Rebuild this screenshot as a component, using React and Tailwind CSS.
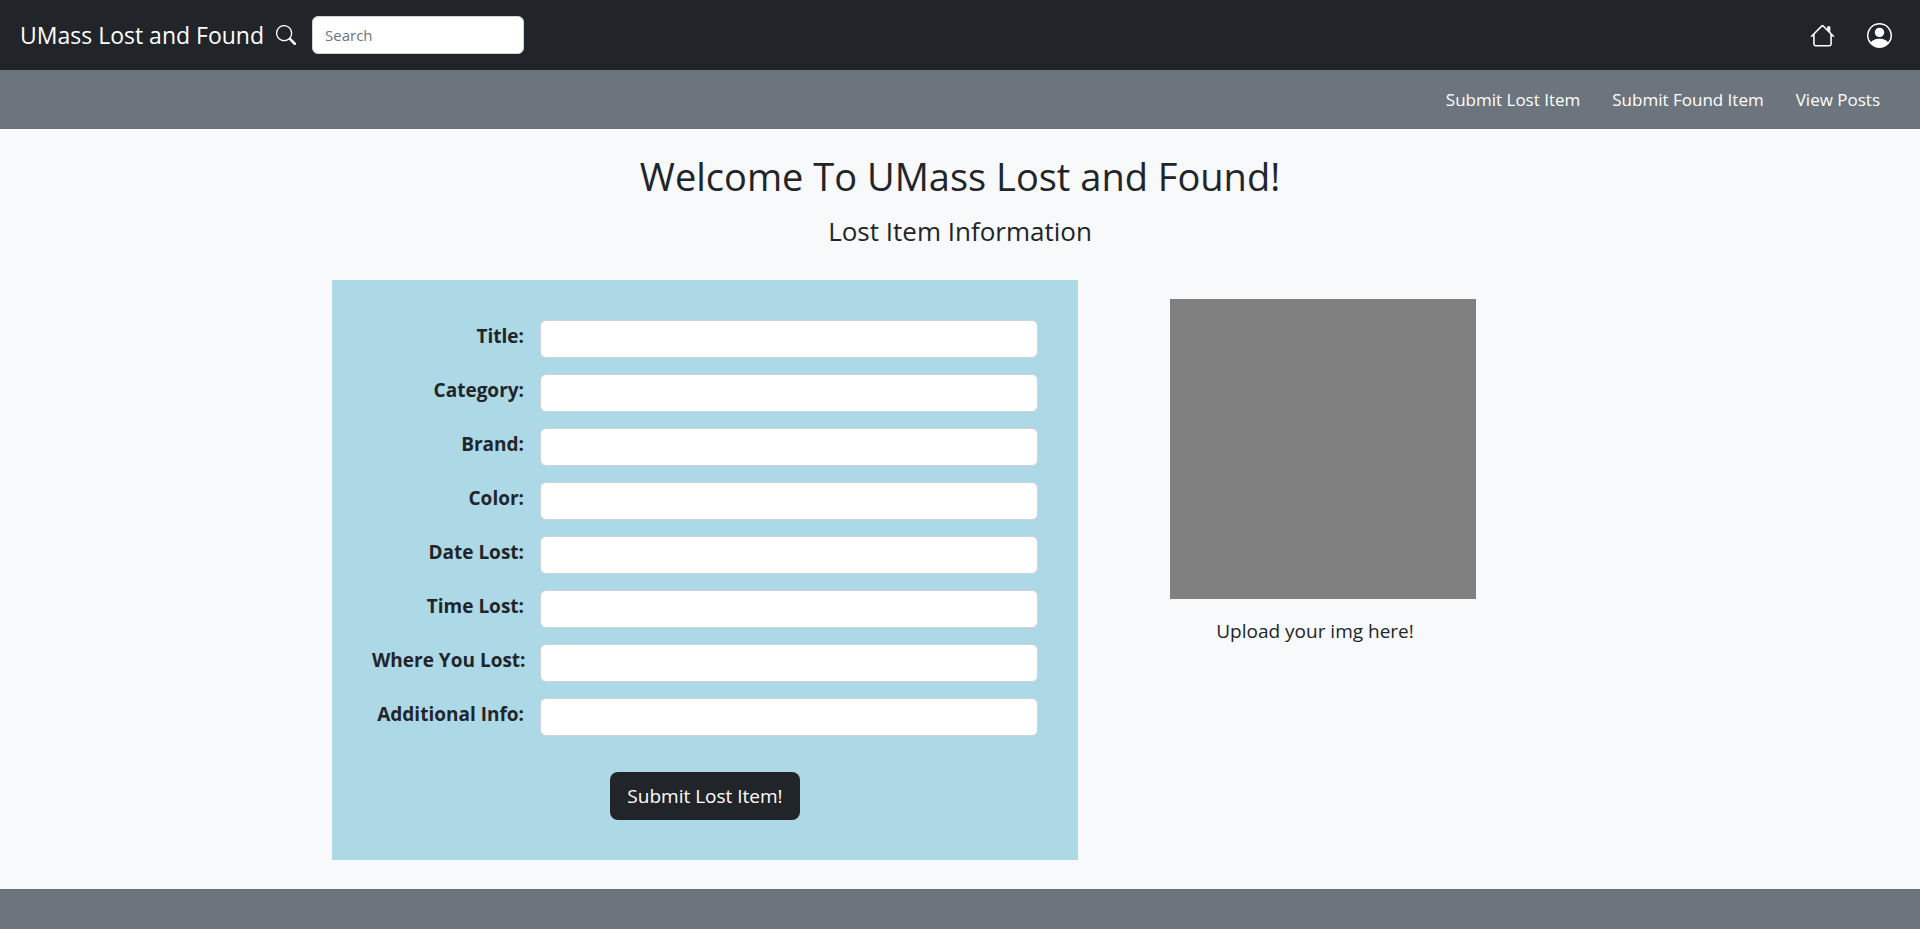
import { BsHouse, BsPersonCircle, BsSearch } from "react-icons/bs";

const fields = [
  { id: "title", label: "Title:" },
  { id: "category", label: "Category:" },
  { id: "brand", label: "Brand:" },
  { id: "color", label: "Color:" },
  { id: "date-lost", label: "Date Lost:" },
  { id: "time-lost", label: "Time Lost:" },
  { id: "where-lost", label: "Where You Lost:" },
  { id: "additional-info", label: "Additional Info:" },
];

const links = ["Submit Lost Item", "Submit Found Item", "View Posts"];

function TopBar() {
  return (
    <header className="flex h-[70px] items-center justify-between bg-[#212529] pl-5 pr-7 text-white">
      <div className="flex items-center">
        <a href="#" className="whitespace-nowrap text-[23px] leading-8">
          UMass Lost and Found
        </a>
        <label htmlFor="search" className="ml-3 mr-4">
          <BsSearch size={20} aria-label="Search" />
        </label>
        <input
          id="search"
          type="search"
          placeholder="Search"
          className="h-[38px] w-[212px] rounded-md border border-[#ced4da] bg-white px-3 text-[15px] text-[#212529] placeholder:text-[#6c757d]"
        />
      </div>
      <nav className="flex items-center gap-8">
        <a href="#" aria-label="Home">
          <BsHouse size={25} />
        </a>
        <a href="#" aria-label="Profile">
          <BsPersonCircle size={25} />
        </a>
      </nav>
    </header>
  );
}

function LinkBar() {
  return (
    <nav className="flex h-[59px] items-center justify-end gap-8 bg-[#6c757d] pr-10">
      {links.map((text) => (
        <a key={text} href="#" className="text-[17px] leading-7 text-white">
          {text}
        </a>
      ))}
    </nav>
  );
}

function LostItemForm() {
  return (
    <form
      className="flex w-full max-w-[746px] flex-col gap-4 bg-[#add8e6] p-10"
      onSubmit={(event) => event.preventDefault()}
    >
      {fields.map(({ id, label }) => (
        <div key={id} className="flex items-start gap-4">
          <label
            htmlFor={id}
            className="w-[152px] shrink-0 whitespace-nowrap text-right text-[19px] font-bold leading-8"
          >
            {label}
          </label>
          <input
            id={id}
            type="text"
            className="h-[38px] min-w-0 flex-1 rounded-md border border-[#ced4da] bg-white px-3"
          />
        </div>
      ))}
      <button
        type="submit"
        className="mt-5 h-12 self-center rounded-lg bg-[#212529] px-[17px] text-[19px] text-white"
      >
        Submit Lost Item!
      </button>
    </form>
  );
}

export default function App() {
  return (
    <div className="flex min-h-screen flex-col bg-[#f8f9fa] font-['Open_Sans','Noto_Sans',sans-serif] text-[#212529]">
      <TopBar />
      <LinkBar />
      <main className="flex-1 pb-7">
        <h1 className="pt-5 text-center text-[38px] leading-[54px]">
          Welcome To UMass Lost and Found!
        </h1>
        <h2 className="mt-2 text-center text-[26px] leading-10">Lost Item Information</h2>
        <div className="mx-auto mt-[29px] flex max-w-[1320px] items-start pl-8">
          <LostItemForm />
          <section className="ml-[92px] mt-[19px] w-[306px] shrink-0">
            <div className="h-[300px] bg-[#808080]" />
            <p className="mt-4 pr-4 text-center text-[19px] leading-8">Upload your img here!</p>
          </section>
        </div>
      </main>
      <footer className="h-10 bg-[#6c757d]" />
    </div>
  );
}
